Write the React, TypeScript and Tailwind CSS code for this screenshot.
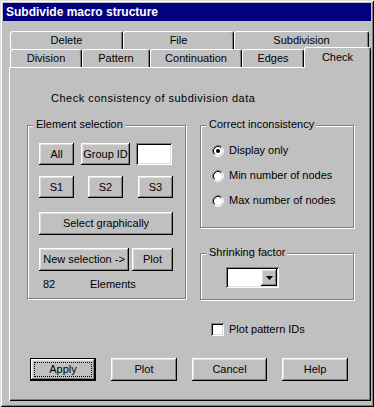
import React from "react";

const raised =
  "shadow-[inset_-1px_-1px_#000,inset_1px_1px_#fff,inset_-2px_-2px_#808080,inset_2px_2px_#dfdfdf]";
const sunken =
  "shadow-[inset_1px_1px_#808080,inset_-1px_-1px_#fff,inset_2px_2px_#000,inset_-2px_-2px_#dfdfdf]";
const etched = "border border-[#808080] shadow-[inset_1px_1px_#fff,1px_1px_#fff]";

const Btn = ({ className, children }: { className: string; children: React.ReactNode }) => (
  <div className={`flex items-center justify-center bg-[#c0c0c0] ${raised} ${className}`}>{children}</div>
);

const Tab = ({ className, children }: { className: string; children: React.ReactNode }) => (
  <div
    className={`flex items-center justify-center bg-[#c0c0c0] rounded-t-[3px] border-t border-l border-r border-t-white border-l-white border-r-black shadow-[inset_-1px_0_#808080] ${className}`}
  >
    {children}
  </div>
);

const Group = ({ label, className, children }: { label: string; className: string; children?: React.ReactNode }) => (
  <div className={`relative ${etched} ${className}`}>
    <span className="absolute -top-[8px] left-[5px] bg-[#c0c0c0] pl-[3px] pr-[2px] leading-[13px]">{label}</span>
    {children}
  </div>
);

const Radio = ({ checked }: { checked?: boolean }) => (
  <svg width="12" height="12" viewBox="0 0 12 12" className="shrink-0">
    <circle cx="6" cy="6" r="4.5" fill="#fff" />
    <path d="M2.11 9.89 A5.5 5.5 0 0 1 9.89 2.11" stroke="#808080" fill="none" />
    <path d="M9.89 2.11 A5.5 5.5 0 0 1 2.11 9.89" stroke="#fff" fill="none" />
    <path d="M2.82 9.18 A4.5 4.5 0 0 1 9.18 2.82" stroke="#000" fill="none" />
    <path d="M9.18 2.82 A4.5 4.5 0 0 1 2.82 9.18" stroke="#dfdfdf" fill="none" />
    {checked && <circle cx="6" cy="6" r="2" fill="#000" />}
  </svg>
);

const RadioRow = ({ label, checked }: { label: string; checked?: boolean }) => (
  <div className="flex items-center h-[13px] pl-[11px]">
    <Radio checked={checked} />
    <span className="ml-[5px] leading-[13px]">{label}</span>
  </div>
);

export default function App() {
  return (
    <div
      className={`w-[374px] h-[407px] bg-[#c0c0c0] p-[3px] flex flex-col text-[11px] text-black font-['Liberation_Sans',Arial,sans-serif] shadow-[inset_1px_1px_#dfdfdf,inset_-1px_-1px_#000,inset_2px_2px_#fff,inset_-2px_-2px_#808080]`}
    >
      <div className="h-[18px] bg-[#000080] flex items-center pl-[3px] text-white font-bold text-[12px]">
        Subdivide macro structure
      </div>

      <div className="mt-[10px] ml-[7px] flex h-[18px]">
        <Tab className="w-[113px] h-[18px]">Delete</Tab>
        <Tab className="w-[111px] h-[18px]">File</Tab>
        <Tab className="w-[135px] h-[18px]">Subdivision</Tab>
      </div>
      <div className="ml-[7px] flex items-end h-[18px]">
        <Tab className="w-[72px] h-[18px]">Division</Tab>
        <Tab className="w-[68px] h-[18px]">Pattern</Tab>
        <Tab className="w-[92px] h-[18px]">Continuation</Tab>
        <Tab className="w-[62px] h-[18px]">Edges</Tab>
        <Tab className="relative z-10 w-[67px] h-[21px] -mb-[1px] pb-[2px]">Check</Tab>
      </div>

      <div className="ml-[6px] w-[362px] h-[334px] flex flex-col shadow-[inset_1px_1px_#fff,inset_-1px_-1px_#000,inset_-2px_-2px_#808080]">
        <div className="mt-[25px] ml-[42px] leading-[13px] tracking-[0.5px]">Check consistency of subdivision data</div>

        <div className="mt-[20px] ml-[18px] flex items-start">
          <Group label="Element selection" className="w-[159px] h-[174px] flex flex-col pl-[11px] pt-[17px]">
            <div className="flex">
              <Btn className="w-[35px] h-[22px]">All</Btn>
              <Btn className="ml-[7px] w-[49px] h-[22px]">Group ID</Btn>
              <div className={`ml-[6px] w-[36px] h-[22px] bg-white ${sunken}`} />
            </div>
            <div className="mt-[11px] flex">
              <Btn className="w-[35px] h-[22px]">S1</Btn>
              <Btn className="ml-[14px] w-[35px] h-[22px]">S2</Btn>
              <Btn className="ml-[15px] w-[35px] h-[22px]">S3</Btn>
            </div>
            <Btn className="mt-[14px] w-[134px] h-[23px]">Select graphically</Btn>
            <div className="mt-[13px] flex">
              <Btn className="w-[90px] h-[23px]">New selection -&gt;</Btn>
              <Btn className="ml-[3px] w-[41px] h-[23px]">Plot</Btn>
            </div>
            <div className="mt-[7px] flex leading-[13px]">
              <span className="ml-[4px] w-[47px]">82</span>
              <span>Elements</span>
            </div>
          </Group>

          <div className="ml-[14px] w-[154px] flex flex-col">
            <Group label="Correct inconsistency" className="h-[103px] flex flex-col gap-[12px] pt-[18px]">
              <RadioRow label="Display only" checked />
              <RadioRow label="Min number of nodes" />
              <RadioRow label="Max number of nodes" />
            </Group>
            <Group label="Shrinking factor" className="mt-[25px] h-[47px] pl-[25px] pt-[13px]">
              <div className={`w-[53px] h-[21px] bg-white flex justify-end p-[2px] ${sunken}`}>
                <div className={`w-[16px] h-[17px] flex items-center justify-center bg-[#c0c0c0] ${raised}`}>
                  <svg width="7" height="4" viewBox="0 0 7 4">
                    <path d="M0 0 H7 L3.5 4 Z" fill="#000" />
                  </svg>
                </div>
              </div>
            </Group>
            <div className="mt-[23px] ml-[11px] flex items-center h-[13px]">
              <div className={`w-[13px] h-[13px] bg-white ${sunken}`} />
              <span className="ml-[5px] leading-[13px]">Plot pattern IDs</span>
            </div>
          </div>
        </div>

        <div className="mt-[22px] ml-[21px] flex">
          <div className="relative w-[66px] h-[23px] flex items-center justify-center bg-[#c0c0c0] shadow-[inset_0_0_0_1px_#000,inset_-2px_-2px_#000,inset_2px_2px_#fff,inset_-3px_-3px_#808080,inset_3px_3px_#dfdfdf]">
            <span className="absolute inset-[4px] border border-dotted border-black" />
            Apply
          </div>
          <Btn className="ml-[15px] w-[66px] h-[23px]">Plot</Btn>
          <Btn className="ml-[15px] w-[75px] h-[23px]">Cancel</Btn>
          <Btn className="ml-[15px] w-[66px] h-[23px]">Help</Btn>
        </div>
      </div>
    </div>
  );
}
